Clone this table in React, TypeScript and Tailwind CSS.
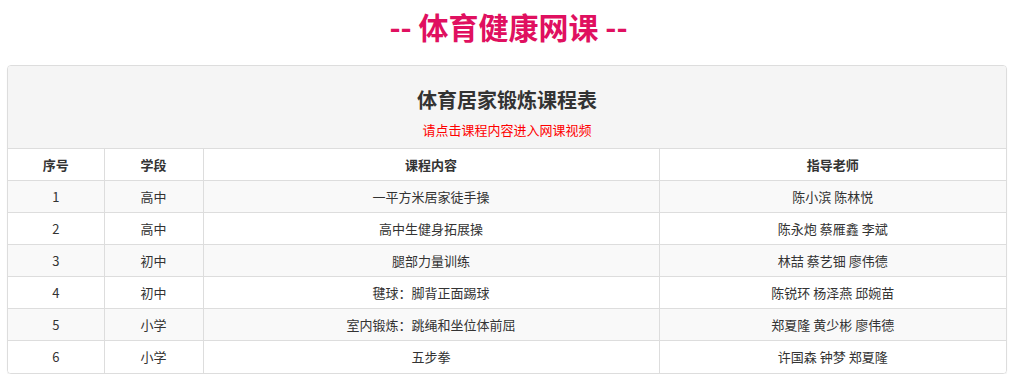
const rows = [
    { no: "1", stage: "高中", course: "一平方米居家徒手操", teacher: "陈小滨 陈林悦" },
    { no: "2", stage: "高中", course: "高中生健身拓展操", teacher: "陈永炮 蔡雁鑫 李斌" },
    { no: "3", stage: "初中", course: "腿部力量训练", teacher: "林喆 蔡艺钿 廖伟德" },
    { no: "4", stage: "初中", course: "毽球：脚背正面踢球", teacher: "陈锐环 杨泽燕 邱婉苗" },
    { no: "5", stage: "小学", course: "室内锻炼：跳绳和坐位体前屈", teacher: "郑夏隆 黄少彬 廖伟德" },
    { no: "6", stage: "小学", course: "五步拳", teacher: "许国森 钟梦 郑夏隆" },
];

const App = () => {
    return (
        <div className="bg-white text-[#333] font-['Microsoft_YaHei','Noto_Sans_CJK_SC',sans-serif]">
            <div className="h-[52px] flex items-center justify-center">
                <h1 className="text-[30px] leading-[33px] font-bold text-[#e01060]">-- 体育健康网课 --</h1>
            </div>

            <div className="mt-[13px] ml-[7px] w-[1000px] border border-[#ddd] rounded-[4px] shadow-[0_1px_1px_rgba(0,0,0,0.08)] overflow-hidden">
                <div className="bg-[#f5f5f5] flex flex-col items-center pt-[20px] pb-[9px]">
                    <h3 className="text-[20px] leading-[28px] font-bold text-[#333]">体育居家锻炼课程表</h3>
                    <p className="mt-[6px] text-[13px] leading-[19px] text-[#ff0000]">请点击课程内容进入网课视频</p>
                </div>
                <table className="w-full border-collapse text-[13px] text-center table-fixed">
                    <colgroup>
                        <col className="w-[96px]" />
                        <col className="w-[99px]" />
                        <col className="w-[456px]" />
                        <col />
                    </colgroup>
                    <thead>
                        <tr className="h-[32px] border-t border-[#ddd]">
                            <th className="border-r border-[#ddd] font-bold">序号</th>
                            <th className="border-r border-[#ddd] font-bold">学段</th>
                            <th className="border-r border-[#ddd] font-bold">课程内容</th>
                            <th className="font-bold">指导老师</th>
                        </tr>
                    </thead>
                    <tbody>
                        {rows.map((r, i) => (
                            <tr key={r.no} className={`h-[32px] border-t border-[#ddd] ${i % 2 === 0 ? "bg-[#f9f9f9]" : "bg-white"}`}>
                                <td className="border-r border-[#ddd]">{r.no}</td>
                                <td className="border-r border-[#ddd]">{r.stage}</td>
                                <td className="border-r border-[#ddd]">{r.course}</td>
                                <td>{r.teacher}</td>
                            </tr>
                        ))}
                    </tbody>
                </table>
            </div>
        </div>
    );
};

export default App;
